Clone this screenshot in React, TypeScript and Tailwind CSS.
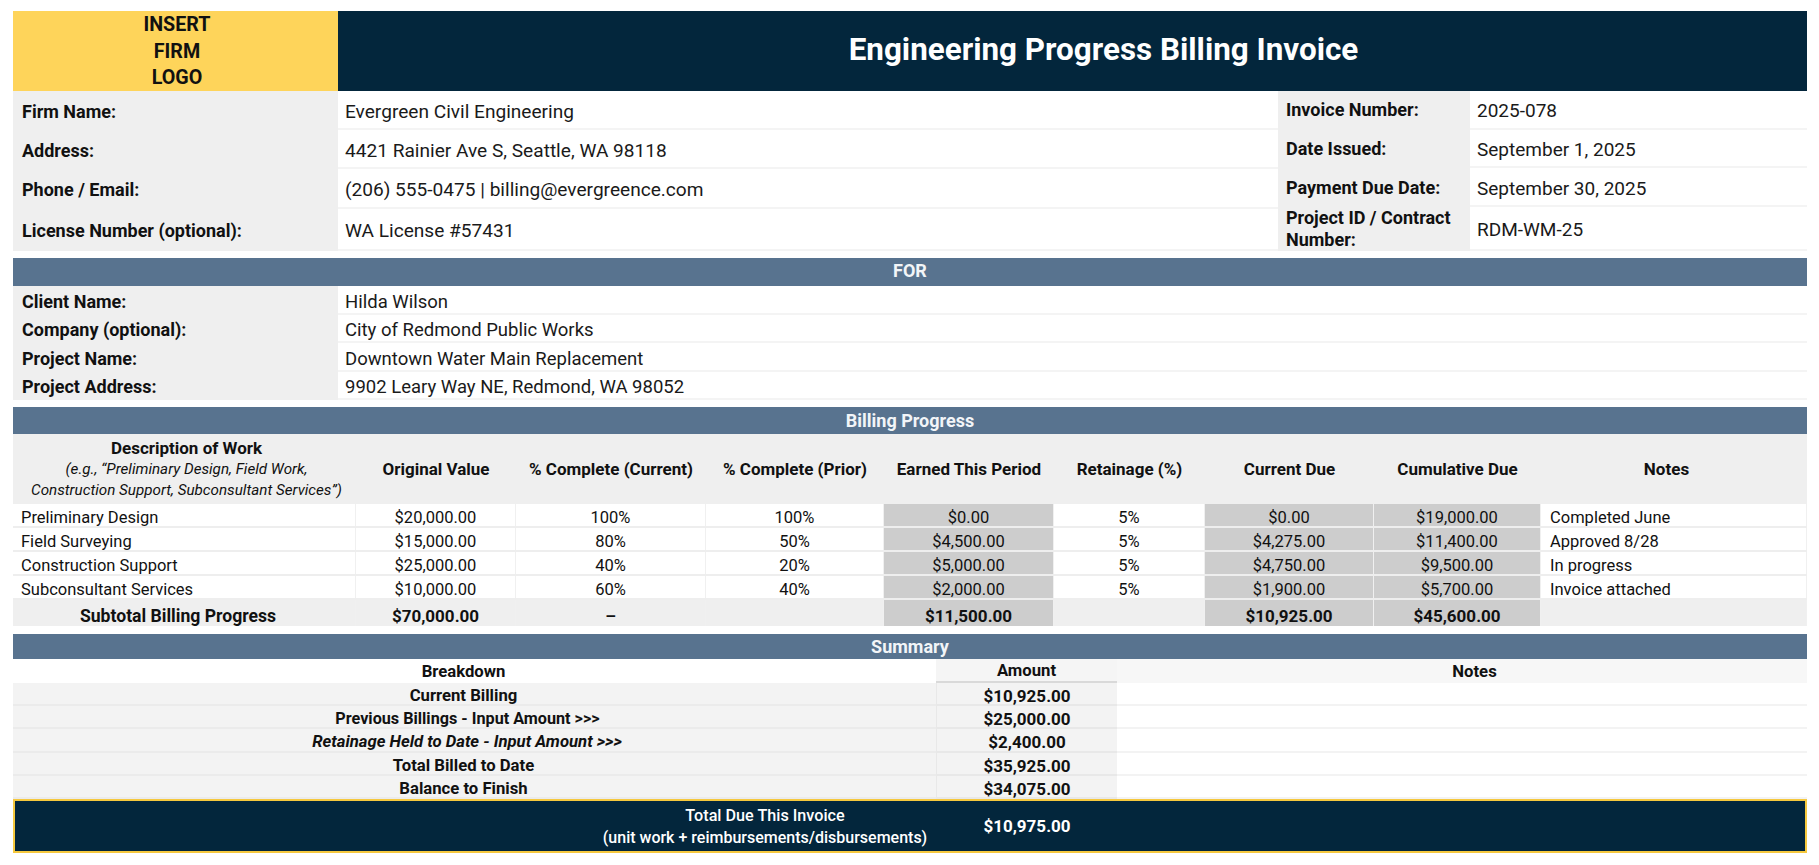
const topLeft = [
  { label: 'Firm Name:', value: 'Evergreen Civil Engineering', h: 'h-[39px]' },
  { label: 'Address:', value: '4421 Rainier Ave S, Seattle, WA 98118', h: 'h-[39px]' },
  { label: 'Phone / Email:', value: '(206) 555-0475 | billing@evergreence.com', h: 'h-[40px]' },
  { label: 'License Number (optional):', value: 'WA License #57431', h: 'h-[42px]' },
];

const topRight = [
  { label: 'Invoice Number:', value: '2025-078', h: 'h-[39px]' },
  { label: 'Date Issued:', value: 'September 1, 2025', h: 'h-[39px]' },
  { label: 'Payment Due Date:', value: 'September 30, 2025', h: 'h-[39px]' },
  { label: 'Project ID / Contract Number:', value: 'RDM-WM-25', h: 'h-[44px]' },
];

const client = [
  { label: 'Client Name:', value: 'Hilda Wilson', h: 'h-[29px]' },
  { label: 'Company (optional):', value: 'City of Redmond Public Works', h: 'h-[28px]' },
  { label: 'Project Name:', value: 'Downtown Water Main Replacement', h: 'h-[29px]' },
  { label: 'Project Address:', value: '9902 Leary Way NE, Redmond, WA 98052', h: 'h-[28px]' },
];

const billing = [
  ['Preliminary Design', '$20,000.00', '100%', '100%', '$0.00', '5%', '$0.00', '$19,000.00', 'Completed June'],
  ['Field Surveying', '$15,000.00', '80%', '50%', '$4,500.00', '5%', '$4,275.00', '$11,400.00', 'Approved 8/28'],
  ['Construction Support', '$25,000.00', '40%', '20%', '$5,000.00', '5%', '$4,750.00', '$9,500.00', 'In progress'],
  ['Subconsultant Services', '$10,000.00', '60%', '40%', '$2,000.00', '5%', '$1,900.00', '$5,700.00', 'Invoice attached'],
];

const billingCols = ['Original Value', '% Complete (Current)', '% Complete (Prior)', 'Earned This Period', 'Retainage (%)', 'Current Due', 'Cumulative Due'];

const summary = [
  { label: 'Current Billing', amount: '$10,925.00', h: 'h-[23px]', extra: 'pr-[22px]' },
  { label: 'Previous Billings - Input Amount >>>', amount: '$25,000.00', h: 'h-[23px]', extra: 'pr-[14px] text-[16.2px]' },
  { label: 'Retainage Held to Date - Input Amount >>>', amount: '$2,400.00', h: 'h-[24px]', extra: 'pr-[15px] italic' },
  { label: 'Total Billed to Date', amount: '$35,925.00', h: 'h-[23px]', extra: 'pr-[22px]' },
  { label: 'Balance to Finish', amount: '$34,075.00', h: 'h-[23px]', extra: 'pr-[22px]' },
];

// billing table tracks, shared by every row
const grid = 'grid grid-cols-[343px_160px_190px_178px_170px_151px_169px_167px_266px]';

function Band({ title, className }: { title: string; className: string }) {
  return (
    <div className={`flex items-center justify-center bg-[#58738f] text-[18px] font-bold leading-[22px] text-[#f2f5f8] ${className}`}>
      {title}
    </div>
  );
}

function InfoRow({ label, value, h, labelClass, valueClass }: { label: string; value: string; h: string; labelClass: string; valueClass: string }) {
  return (
    <div className={`flex ${h}`}>
      <div className={`flex shrink-0 items-center bg-[#efefef] text-[18px] font-bold leading-[22px] text-[#111] ${labelClass}`}>{label}</div>
      <div className={`flex flex-1 items-center border-b-2 border-[#f4f4f4] pl-[7px] pt-[4px] leading-[20px] text-[#1a1a1a] ${valueClass}`}>{value}</div>
    </div>
  );
}

function BillingCell({ text, index, bold }: { text: string; index: number; bold?: boolean }) {
  const shaded = index === 4 || index === 6 || index === 7;
  let align = 'justify-center';
  if (!bold && index === 0) align = 'justify-start pl-[8px]';
  if (!bold && index === 8) align = 'justify-start pl-[9px]';
  if (bold && index === 0) align = 'justify-center pr-[12px] text-[17.6px]';
  const bg = shaded ? 'bg-[#cdcdcd]' : bold ? 'bg-[#efefef]' : 'bg-white';
  return (
    <div className={`flex items-center border-r border-[#f0f0f0] pt-[6px] leading-[16px] ${align} ${bg} ${bold ? 'font-bold' : ''}`}>
      {text}
    </div>
  );
}

export default function App() {
  return (
    <div className="h-[865px] w-[1819px] overflow-hidden bg-white pl-[13px] pr-[12px] pt-[11px] font-['Roboto',sans-serif] text-[#111]">
      {/* Title */}
      <div className="flex h-[80px]">
        <div className="flex w-[325px] shrink-0 flex-col items-center justify-center bg-[#fed45a] pl-[3px] pt-[2px] text-[19.7px] font-bold leading-[26.5px] text-[#111]">
          <span>INSERT</span>
          <span>FIRM</span>
          <span>LOGO</span>
        </div>
        <div className="flex flex-1 items-center justify-center bg-[#03263c] pb-[2px] pl-[62px] text-[31.4px] font-bold text-white">
          Engineering Progress Billing Invoice
        </div>
      </div>

      {/* Firm and invoice details */}
      <div className="flex h-[160px]">
        <div className="flex w-[1265px] shrink-0 flex-col">
          {topLeft.map((r) => (
            <InfoRow key={r.label} {...r} labelClass="w-[325px] pl-[9px] pt-[2px]" valueClass="text-[19.1px]" />
          ))}
        </div>
        <div className="flex flex-1 flex-col">
          {topRight.map((r) => (
            <InfoRow key={r.label} {...r} labelClass="w-[192px] pl-[8px]" valueClass="text-[19px]" />
          ))}
        </div>
      </div>

      <Band title="FOR" className="mt-[7px] h-[28px] pb-[2px]" />
      <div className="flex flex-col">
        {client.map((r) => (
          <InfoRow key={r.label} {...r} labelClass="w-[325px] pl-[9px] pt-[2px]" valueClass="text-[18.5px]" />
        ))}
      </div>

      <Band title="Billing Progress" className="mt-[7px] h-[27px]" />
      <div className={`${grid} h-[70px] bg-[#efefef] text-[17px] font-bold`}>
        <div className="flex flex-col items-center justify-center pl-[4px] text-center leading-[21px]">
          <span>Description of Work</span>
          <span className="text-[15.2px] font-normal italic">(e.g., “Preliminary Design, Field Work,</span>
          <span className="text-[15.2px] font-normal italic">Construction Support, Subconsultant Services”)</span>
        </div>
        {billingCols.map((c) => (
          <div key={c} className="flex items-center justify-center pt-[2px]">{c}</div>
        ))}
        <div className="flex items-center justify-center pr-[15px] pt-[2px]">Notes</div>
      </div>
      {billing.map((row) => (
        <div key={row[0]} className={`${grid} h-[24px] border-b-2 border-[#eeeeee] text-[16.5px]`}>
          {row.map((t, i) => <BillingCell key={i} text={t} index={i} />)}
        </div>
      ))}
      <div className={`${grid} h-[26px] text-[17px]`}>
        {['Subtotal Billing Progress', '$70,000.00', '–', '', '$11,500.00', '', '$10,925.00', '$45,600.00', ''].map((t, i) => (
          <BillingCell key={i} text={t} index={i} bold />
        ))}
      </div>

      <Band title="Summary" className="mt-[8px] h-[25px]" />
      <div className="grid h-[24px] grid-cols-[923px_181px_1fr] text-[16.7px] font-bold leading-[18px]">
        <div className="flex items-center justify-center bg-white pr-[22px] pt-[2px]">Breakdown</div>
        <div className="flex items-center justify-center border-b-2 border-[#d9d9d9] bg-[#f5f5f5] pt-[2px]">Amount</div>
        <div className="flex items-center justify-center bg-[#f7f7f7] pl-[25px] pt-[2px]">Notes</div>
      </div>
      {summary.map((r) => (
        <div key={r.label} className={`grid ${r.h} grid-cols-[923px_181px_1fr] text-[16.7px] font-bold leading-[16px]`}>
          <div className={`flex items-center justify-center border-b-2 border-[#ebebeb] bg-[#f3f3f3] pt-[4px] ${r.extra}`}>{r.label}</div>
          <div className="flex items-center justify-center border-b-2 border-l border-[#e8e8e8] bg-[#f3f3f3] pt-[4px] text-[17px]">{r.amount}</div>
          <div className="border-b-2 border-[#f3f3f3] bg-white" />
        </div>
      ))}
      <div className="grid h-[54px] grid-cols-[923px_181px_1fr] border-2 border-[#f5c83e] bg-[#03263c] text-white">
        <div className="flex flex-col items-center justify-center pl-[577px] pt-[2px] text-[16.2px] font-medium leading-[22px]">
          <span>Total Due This Invoice</span>
          <span className="text-[16px]">(unit work + reimbursements/disbursements)</span>
        </div>
        <div className="flex items-center justify-center pr-[3px] pt-[2px] text-[17px] font-bold">$10,975.00</div>
        <div />
      </div>
    </div>
  );
}
